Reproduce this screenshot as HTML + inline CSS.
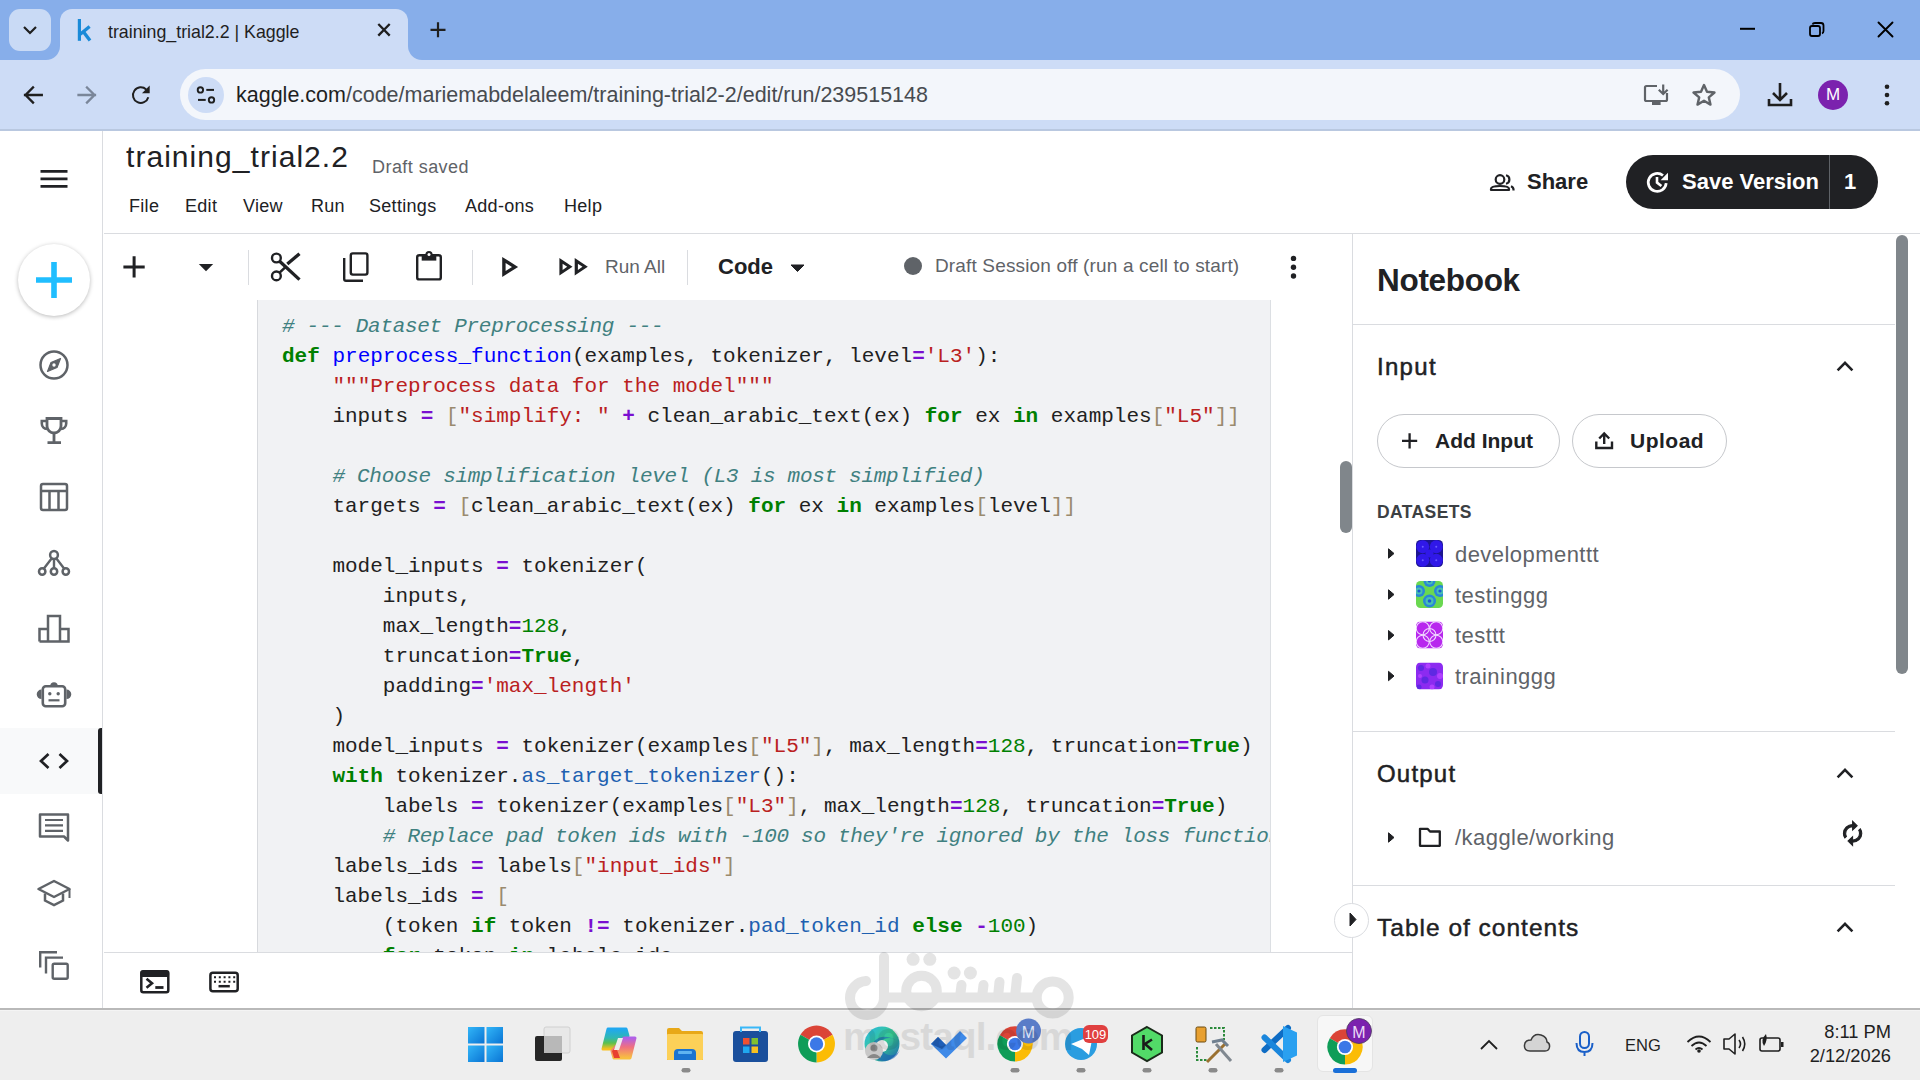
<!DOCTYPE html>
<html><head><meta charset="utf-8">
<style>
*{box-sizing:border-box;margin:0;padding:0}
html,body{width:1920px;height:1080px;overflow:hidden;background:#fff;font-family:"Liberation Sans",sans-serif;color:#202124}
.a{position:absolute}
svg{position:absolute;overflow:visible}
#tabstrip{left:0;top:0;width:1920px;height:61px;background:#87aeea}
#toolbar{left:0;top:60px;width:1920px;height:70px;background:#cddcf6}
#tbline{left:0;top:129px;width:1920px;height:2px;background:#b9c8e0}
#omni{left:180px;top:69px;width:1560px;height:51px;border-radius:26px;background:#f3f6fb}
.code{font-family:"Liberation Mono",monospace;font-size:21px;line-height:30px;white-space:pre;color:#212121}
.c{color:#408080;font-style:italic;letter-spacing:-0.3px}
.k{color:#008000;font-weight:bold}
.f{color:#0000ff}
.s{color:#ba2121}
.o{color:#7a0fd0;font-weight:bold}
.b{color:#9a8a6e}
.n{color:#008000}
.p{color:#2060b0}
</style></head><body>
<!-- ===== BROWSER CHROME ===== -->
<div id="tabstrip" class="a"></div>
<div class="a" style="left:60px;top:9px;width:348px;height:60px;border-radius:12px 12px 0 0;background:#cddcf6"></div>
<div class="a" style="left:46px;top:46px;width:14px;height:14px;background:#cddcf6"></div>
<div class="a" style="left:32px;top:32px;width:28px;height:28px;border-radius:0 0 14px 0;background:#87aeea"></div>
<div class="a" style="left:408px;top:46px;width:14px;height:14px;background:#cddcf6"></div>
<div class="a" style="left:408px;top:32px;width:28px;height:28px;border-radius:0 0 0 14px;background:#87aeea"></div>
<div class="a" style="left:9px;top:9px;width:42px;height:42px;border-radius:11px;background:#c9daf5"></div>
<svg style="left:0;top:0" width="1" height="1"><path d="M24 27 L30 33 L36 27" fill="none" stroke="#1f1f1f" stroke-width="2.2"/></svg>
<div id="toolbar" class="a"></div>
<div id="tbline" class="a"></div>

<!-- tab content -->
<svg style="left:0;top:0" width="1" height="1"><rect x="77.8" y="19" width="3.2" height="21.8" fill="#1a8ad8"/><path d="M80.2 34.2 L89.6 26.4" stroke="#1a8ad8" stroke-width="3.3"/><path d="M83.2 31.4 L90 40.6" stroke="#1a8ad8" stroke-width="3.3"/></svg>
<div class="a" style="left:108px;top:21px;font-size:17.8px;line-height:22px;color:#1f1f1f">training_trial2.2 | Kaggle</div>
<svg style="left:0;top:0" width="1" height="1"><path d="M378.3 24 L389.7 35.6 M389.7 24 L378.3 35.6" stroke="#1f1f1f" stroke-width="2.3"/></svg>
<svg style="left:0;top:0" width="1" height="1"><path d="M438 22.3 V37.3 M430.5 29.8 H445.5" stroke="#1f1f1f" stroke-width="2.2"/></svg>
<!-- window controls -->
<svg style="left:0;top:0" width="1" height="1"><path d="M1740 28.8 H1755" stroke="#000" stroke-width="2"/>
<rect x="1810" y="26" width="10" height="10" rx="2" fill="none" stroke="#000" stroke-width="1.8"/>
<path d="M1812.5 24.5 Q1813 23 1815 23 H1821 Q1823.5 23 1823.5 25.5 V31 Q1823.5 33 1822 33.5" fill="none" stroke="#000" stroke-width="1.8"/>
<path d="M1878.5 22.5 L1892.5 36.5 M1892.5 22.5 L1878.5 36.5" stroke="#000" stroke-width="1.9" stroke-linecap="round"/></svg>
<!-- nav buttons -->
<svg style="left:0;top:0" width="1" height="1">
<path d="M41.8 95 H25 M33 87.5 L25.5 95 L33 102.5" fill="none" stroke="#1f1f1f" stroke-width="2.3" stroke-linecap="square"/>
<path d="M78.5 95 H95 M87 87.5 L94.5 95 L87 102.5" fill="none" stroke="#7a8699" stroke-width="2.3" stroke-linecap="square"/>
<path d="M148.3 97.2 A 7.8 7.8 0 1 1 146.2 89.5" fill="none" stroke="#1f1f1f" stroke-width="2"/>
<path d="M149.7 85.5 V93.3 H142 Z" fill="#1f1f1f"/>
</svg>
<div id="omni" class="a"></div>
<div class="a" style="left:187.5px;top:76.5px;width:36px;height:36px;border-radius:18px;background:#cddcf6"></div>
<svg style="left:0;top:0" width="1" height="1">
<circle cx="200.4" cy="89.9" r="2.7" fill="none" stroke="#1f1f1f" stroke-width="1.9"/>
<path d="M206.3 89.9 H214" stroke="#1f1f1f" stroke-width="2"/>
<path d="M198 99.9 H205.7" stroke="#1f1f1f" stroke-width="2"/>
<circle cx="211.5" cy="99.9" r="2.7" fill="none" stroke="#1f1f1f" stroke-width="1.9"/>
</svg>
<div class="a" id="url" style="left:236px;top:82px;font-size:21.5px;line-height:26px;color:#1f1f1f;white-space:nowrap">kaggle.com<span style="color:#474b50">/code/mariemabdelaleem/training-trial2-2/edit/run/239515148</span></div>
<!-- right toolbar icons -->
<svg style="left:0;top:0" width="1" height="1">
<path d="M1657 86 H1646.5 Q1645 86 1645 87.5 V99.5 Q1645 101 1646.5 101 H1665.5 Q1667 101 1667 99.5 V93" fill="none" stroke="#5f6368" stroke-width="2.2"/>
<rect x="1652" y="101" width="8.6" height="4" fill="#5f6368"/>
<path d="M1663.2 84.5 V94 M1658.8 89.8 L1663.2 94 L1667.6 89.8" fill="none" stroke="#5f6368" stroke-width="2.2"/>
<path d="M1704 85 L1707 91.8 L1714.5 92.5 L1708.8 97.4 L1710.5 104.6 L1704 100.8 L1697.5 104.6 L1699.2 97.4 L1693.5 92.5 L1701 91.8 Z" fill="none" stroke="#5f6368" stroke-width="2.4" stroke-linejoin="round"/>
<path d="M1780 83 V100 M1773 93 L1780 100 L1787 93" fill="none" stroke="#1f1f1f" stroke-width="2.6"/>
<path d="M1769 99 V105 H1791 V99" fill="none" stroke="#1f1f1f" stroke-width="2.6"/>
<circle cx="1887" cy="86.7" r="2.3" fill="#1f1f1f"/><circle cx="1887" cy="95" r="2.3" fill="#1f1f1f"/><circle cx="1887" cy="103.3" r="2.3" fill="#1f1f1f"/>
</svg>
<div class="a" style="left:1818px;top:80px;width:30px;height:30px;border-radius:15px;background:#7b22ae;color:#fff;font-size:17px;line-height:30px;text-align:center">M</div>

<!-- ===== KAGGLE PAGE ===== -->
<!-- left nav -->
<div class="a" style="left:102px;top:131px;width:1px;height:877px;background:#dadce0"></div>
<svg style="left:0;top:0" width="1" height="1">
<path d="M40.5 171.3 H67.5 M40.5 178.8 H67.5 M40.5 186.3 H67.5" stroke="#202124" stroke-width="2.8"/>
</svg>
<div class="a" style="left:18px;top:244px;width:72px;height:72px;border-radius:36px;background:#fff;box-shadow:0 1px 4px rgba(0,0,0,0.28)"></div>
<svg style="left:0;top:0" width="1" height="1">
<path d="M54 262 V298 M36 280 H72" stroke="#20beff" stroke-width="5.6"/>
</svg>
<div id="navsel" class="a" style="left:0;top:728px;width:99px;height:66px;background:#f8f9fa"></div>
<div class="a" style="left:98px;top:728px;width:4px;height:66px;border-radius:3px 0 0 3px;background:#202124"></div>
<svg style="left:0;top:0" width="1" height="1" fill="none" stroke="#5f6368" stroke-width="2.5">
<!-- compass -->
<circle cx="54" cy="365" r="13.5"/>
<path d="M60.5 358.5 L57 367.5 L47.5 371.5 L51 362.5 Z" fill="#5f6368" stroke-width="1.2" stroke-linejoin="round"/>
<circle cx="54" cy="365" r="1.7" fill="#fff" stroke="none"/>
<!-- trophy -->
<path d="M47 418.5 H61 V426 A7 7 0 0 1 47 426 Z" stroke-width="2.8"/>
<path d="M47 421 H41.8 V423.5 A5.5 5.5 0 0 0 47 429 M61 421 H66.2 V423.5 A5.5 5.5 0 0 1 61 429" stroke-width="2.6"/>
<path d="M54 433 V442 M47.5 442.6 H61" stroke-width="2.8"/>
<!-- table -->
<rect x="41" y="484" width="26" height="26" rx="2"/>
<path d="M41 491 H67 M49.5 491 V510 M58.5 491 V510"/>
<!-- models -->
<circle cx="54" cy="555" r="3.9"/><circle cx="42.2" cy="571.5" r="3.2"/><circle cx="54" cy="571.5" r="3.2"/><circle cx="65.8" cy="571.5" r="3.2"/>
<path d="M51.8 558.3 L43.9 568.6 M54 559 V568.3 M56.2 558.3 L64.1 568.6" stroke-width="2.4"/>
<!-- chart -->
<path d="M39.5 641.5 H68.5 V629 H60 V641.5 M60 641.5 V616 H48 V641.5 M48 641.5 V629 H39.5 V641.5"/>
<!-- robot -->
<rect x="42.8" y="686.3" width="22.4" height="20" rx="3" stroke-width="2.6"/>
<path d="M41.5 689.5 A4.8 4.8 0 0 0 41.5 699.1 Z M66.5 689.5 A4.8 4.8 0 0 1 66.5 699.1 Z" fill="#5f6368" stroke="none"/>
<path d="M50.3 686 A3.7 3.7 0 0 1 57.7 686 Z" fill="#5f6368" stroke="none"/>
<circle cx="49.8" cy="693.7" r="1.7" fill="#5f6368" stroke="none"/><circle cx="58.2" cy="693.7" r="1.7" fill="#5f6368" stroke="none"/>
<path d="M48.5 700.3 H59.5" stroke-width="2.2"/>
<!-- comments -->
<path d="M40 814.5 H68 V840.5 L64 836.5 H40 Z" stroke-linejoin="round"/>
<path d="M45 820 H63 M45 825.4 H63 M45 830.8 H63" stroke-width="2.2"/>
<!-- learn -->
<path d="M38.5 889 L54 881 L69.5 889 L54 897 Z" stroke-linejoin="round"/>
<path d="M45 893.5 V900.5 L54 905 L63 900.5 V893.5"/>
<path d="M69.5 889 V898" stroke-width="2"/>
<!-- copy -->
<path d="M40.2 967.5 V952.3 H57" stroke-width="2.4"/>
<path d="M46 973.5 V957.6 H63" stroke-width="2.4"/>
<rect x="52.7" y="963.8" width="15" height="15" rx="1.5" stroke-width="2.4"/>
</svg>
<svg style="left:0;top:0" width="1" height="1" fill="none" stroke="#202124" stroke-width="3">
<path d="M48.5 754 L41 761 L48.5 768 M59.5 754 L67 761 L59.5 768" stroke-width="2.7"/>
</svg>

<!-- header -->
<div class="a" style="left:126px;top:138px;font-size:30px;line-height:38px;color:#202124;letter-spacing:1.05px">training_trial2.2</div>
<div class="a" style="left:372px;top:156px;font-size:18px;line-height:22px;color:#5f6368;letter-spacing:0.45px">Draft saved</div>
<div class="a" style="left:129px;top:195px;font-size:18px;line-height:22px;color:#202124;white-space:nowrap;letter-spacing:0.3px">
<span class="a" style="left:0">File</span><span class="a" style="left:56px">Edit</span><span class="a" style="left:114px">View</span><span class="a" style="left:182px">Run</span><span class="a" style="left:240px">Settings</span><span class="a" style="left:336px">Add-ons</span><span class="a" style="left:435px">Help</span></div>
<div class="a" style="left:104px;top:233px;width:1816px;height:1px;background:#dadce0"></div>

<!-- share / save version -->
<svg style="left:0;top:0" width="1" height="1" fill="none" stroke="#202124" stroke-width="2.3">
<circle cx="1500" cy="179.5" r="4.3" stroke-width="2.2"/>
<path d="M1491 190 V189 Q1491 186 1500 186 Q1509 186 1509 189 V190 Z" stroke-width="2.2" stroke-linejoin="round"/>
<path d="M1506 175.3 A4.3 4.3 0 0 1 1506 183.7 M1511 186.2 Q1513.5 187.2 1513.5 189.5 V190.5" stroke-width="2.2"/>
</svg>
<div class="a" style="left:1527px;top:169px;font-size:22px;line-height:26px;font-weight:bold;color:#202124">Share</div>
<div class="a" style="left:1626px;top:155px;width:252px;height:54px;border-radius:27px;background:#202124"></div>
<div class="a" style="left:1829px;top:155px;width:1px;height:54px;background:#5f6368"></div>
<svg style="left:0;top:0" width="1" height="1" fill="none" stroke="#fff" stroke-width="2.6">
<path d="M1666.2 183.2 A 9 9 0 1 1 1663 175.5" stroke-width="2.7"/>
<path d="M1668 172.8 V180.3 H1660.6 Z" fill="#fff" stroke="none"/>
<path d="M1657 177 V182.6 L1661.4 186" stroke-width="2.6"/>
</svg>
<div class="a" style="left:1682px;top:169px;font-size:22px;line-height:26px;font-weight:bold;color:#fff">Save Version</div>
<div class="a" style="left:1844px;top:169px;font-size:22px;line-height:26px;font-weight:bold;color:#fff">1</div>

<!-- notebook toolbar -->
<svg style="left:0;top:0" width="1" height="1" fill="none" stroke="#202124" stroke-width="2.6">
<path d="M134.1 256.3 V277.5 M123.4 266.9 H144.7" stroke-width="3"/>
<path d="M198.8 264 H213.2 L206 271.2 Z" fill="#202124" stroke="none"/>
</svg>
<div class="a" style="left:248px;top:250px;width:1px;height:35px;background:#dadce0"></div>
<div class="a" style="left:472px;top:250px;width:1px;height:35px;background:#dadce0"></div>
<div class="a" style="left:687px;top:250px;width:1px;height:35px;background:#dadce0"></div>
<svg style="left:0;top:0" width="1" height="1" fill="none" stroke="#202124" stroke-width="2.6">
<!-- scissors -->
<circle cx="276.4" cy="258" r="4.4" stroke-width="2.4"/><circle cx="276.4" cy="275.9" r="4.4" stroke-width="2.4"/>
<path d="M279.6 261.2 L299.5 279.6" stroke-width="3.3"/>
<path d="M287.3 264 L299.5 253.7" stroke-width="3.3"/>
<path d="M279.6 272.6 L286 266.6" stroke-width="2.6"/>
<!-- copy -->
<path d="M344.2 258 V279 Q344.2 280.8 346 280.8 H363" stroke-width="2.4"/>
<rect x="350.8" y="253.4" width="16.6" height="21.2" rx="2" stroke-width="2.4"/>
<!-- paste -->
<rect x="417.2" y="255.2" width="23.6" height="24.2" rx="2" stroke-width="2.4"/>
<rect x="421.7" y="254" width="14.6" height="6.6" fill="#202124" stroke="none"/>
<circle cx="429" cy="254.6" r="3.6" fill="#202124" stroke="none"/><circle cx="429" cy="254.6" r="1.5" fill="#fff" stroke="none"/>
<!-- play -->
<path d="M502.2 256.9 L518.1 266.9 L502.2 276.9 Z M505.6 262.9 V270.9 L512 266.9 Z" fill="#202124" fill-rule="evenodd" stroke="none"/>
<!-- run all -->
<path d="M559.4 258.1 L572.5 266.85 L559.4 275.6 Z M562.6 263.8 V269.9 L567.2 266.85 Z M574.7 258.1 L587.8 266.85 L574.7 275.6 Z M577.9 263.8 V269.9 L582.5 266.85 Z" fill="#202124" fill-rule="evenodd" stroke="none"/>
<!-- caret code -->
<path d="M791 265 H804 L797.5 271.5 Z" fill="#202124" stroke-width="1"/>
<circle cx="1293.5" cy="258.4" r="2.7" fill="#202124" stroke="none"/><circle cx="1293.5" cy="267.2" r="2.7" fill="#202124" stroke="none"/><circle cx="1293.5" cy="276" r="2.7" fill="#202124" stroke="none"/>
</svg>
<div class="a" style="left:605px;top:256px;font-size:19px;line-height:22px;color:#5f6368">Run All</div>
<div class="a" style="left:718px;top:254px;font-size:22px;line-height:26px;font-weight:bold;color:#202124">Code</div>
<div class="a" style="left:904px;top:256.5px;width:18px;height:18px;border-radius:9px;background:#5f6368"></div>
<div class="a" style="left:935px;top:255px;font-size:19px;line-height:22px;color:#5f6368;letter-spacing:0.15px">Draft Session off (run a cell to start)</div>
<div class="a" style="left:1352px;top:234px;width:1px;height:774px;background:#dadce0"></div>

<!-- code cell -->
<div class="a" style="left:257px;top:300px;width:1014px;height:653px;background:#f1f2f4;border-left:1px solid #d7d9dd;border-right:1px solid #dcdfe3;overflow:hidden">
<div class="a code" style="left:24px;top:12px"><span class="c"># --- Dataset Preprocessing ---</span>
<span class="k">def</span> <span class="f">preprocess_function</span>(examples, tokenizer, level<span class="o">=</span><span class="s">'L3'</span>):
    <span class="s">"""Preprocess data for the model"""</span>
    inputs <span class="o">=</span> <span class="b">[</span><span class="s">"simplify: "</span> <span class="o">+</span> clean_arabic_text(ex) <span class="k">for</span> ex <span class="k">in</span> examples<span class="b">[</span><span class="s">"L5"</span><span class="b">]]</span>

    <span class="c"># Choose simplification level (L3 is most simplified)</span>
    targets <span class="o">=</span> <span class="b">[</span>clean_arabic_text(ex) <span class="k">for</span> ex <span class="k">in</span> examples<span class="b">[</span>level<span class="b">]]</span>

    model_inputs <span class="o">=</span> tokenizer(
        inputs,
        max_length<span class="o">=</span><span class="n">128</span>,
        truncation<span class="o">=</span><span class="k">True</span>,
        padding<span class="o">=</span><span class="s">'max_length'</span>
    )
    model_inputs <span class="o">=</span> tokenizer(examples<span class="b">[</span><span class="s">"L5"</span><span class="b">]</span>, max_length<span class="o">=</span><span class="n">128</span>, truncation<span class="o">=</span><span class="k">True</span>)
    <span class="k">with</span> tokenizer.<span class="p">as_target_tokenizer</span>():
        labels <span class="o">=</span> tokenizer(examples<span class="b">[</span><span class="s">"L3"</span><span class="b">]</span>, max_length<span class="o">=</span><span class="n">128</span>, truncation<span class="o">=</span><span class="k">True</span>)
        <span class="c"># Replace pad token ids with -100 so they're ignored by the loss function</span>
    labels_ids <span class="o">=</span> labels<span class="b">[</span><span class="s">"input_ids"</span><span class="b">]</span>
    labels_ids <span class="o">=</span> <span class="b">[</span>
        (token <span class="k">if</span> token <span class="o">!=</span> tokenizer.<span class="p">pad_token_id</span> <span class="k">else</span> <span class="o">-</span><span class="n">100</span>)
        <span class="k">for</span> token <span class="k">in</span> labels_ids
    <span class="b">]</span></div>
</div>
<div class="a" style="left:1340px;top:461px;width:12px;height:72px;border-radius:6px;background:#80868b"></div>

<!-- bottom bar -->
<div class="a" style="left:104px;top:952px;width:1248px;height:1px;background:#dadce0"></div>
<div class="a" style="left:104px;top:953px;width:1248px;height:55px;background:#fff"></div>
<svg style="left:0;top:0" width="1" height="1" fill="none" stroke="#202124" stroke-width="2.6">
<rect x="141.3" y="971.2" width="27" height="21" rx="2" stroke-width="2.5"/>
<rect x="140.5" y="970.4" width="28.6" height="6.5" rx="2" fill="#202124" stroke="none"/>
<path d="M146.5 978.8 L152 983.3 L146.5 987.8" stroke-width="2.6"/>
<path d="M155.3 987.5 H163.5" stroke-width="2.8"/>
<rect x="210.4" y="972.8" width="27.3" height="18.4" rx="2.5" stroke-width="2.5"/>
<path d="M214 977.3 H235.5 M214 981.8 H235.5" stroke-width="2" stroke-dasharray="2 2.8"/>
<path d="M218.5 986.2 H229.8" stroke-width="2.5"/>
</svg>

<!-- right panel -->
<div class="a" style="left:1377px;top:263px;font-size:31.5px;line-height:34px;letter-spacing:-0.3px;font-weight:bold;color:#202124">Notebook</div>
<div class="a" style="left:1896px;top:235px;width:12px;height:439px;border-radius:6px;background:#80868b"></div>
<div class="a" style="left:1353px;top:324px;width:542px;height:1px;background:#dadce0"></div>
<div class="a" style="left:1377px;top:353px;font-size:24px;line-height:28px;color:#202124;letter-spacing:1.3px;-webkit-text-stroke:0.5px #202124">Input</div>
<div class="a" style="left:1377px;top:414px;width:183px;height:54px;border-radius:27px;border:1px solid #c6c8cc"></div>
<div class="a" style="left:1572px;top:414px;width:155px;height:54px;border-radius:27px;border:1px solid #c6c8cc"></div>
<div class="a" style="left:1435px;top:428px;font-size:21px;line-height:26px;font-weight:bold;color:#202124">Add Input</div>
<div class="a" style="left:1630px;top:428px;font-size:21px;line-height:26px;font-weight:bold;color:#202124;letter-spacing:0.5px">Upload</div>
<div class="a" style="left:1377px;top:502px;font-size:17.5px;line-height:20px;letter-spacing:0.4px;font-weight:bold;color:#3c4043">DATASETS</div>
<div class="a" style="left:1455px;top:542px;font-size:22px;line-height:26px;color:#5f6368;letter-spacing:0.45px">developmenttt</div>
<div class="a" style="left:1455px;top:583px;font-size:22px;line-height:26px;color:#5f6368;letter-spacing:0.45px">testinggg</div>
<div class="a" style="left:1455px;top:623px;font-size:22px;line-height:26px;color:#5f6368;letter-spacing:0.45px">testtt</div>
<div class="a" style="left:1455px;top:664px;font-size:22px;line-height:26px;color:#5f6368;letter-spacing:0.45px">traininggg</div>
<div class="a" style="left:1353px;top:731px;width:542px;height:1px;background:#dadce0"></div>
<div class="a" style="left:1377px;top:760px;font-size:24px;line-height:28px;color:#202124;letter-spacing:1.2px;-webkit-text-stroke:0.5px #202124">Output</div>
<div class="a" style="left:1455px;top:825px;font-size:22px;line-height:26px;color:#5f6368;letter-spacing:0.45px">/kaggle/working</div>
<div class="a" style="left:1353px;top:885px;width:542px;height:1px;background:#dadce0"></div>
<div class="a" style="left:1377px;top:912px;font-size:24.5px;line-height:32px;color:#202124;letter-spacing:1.0px;-webkit-text-stroke:0.45px #202124">Table of contents</div>
<div class="a" style="left:1334px;top:903px;width:35px;height:35px;border-radius:18px;background:#fff;border:1px solid #dadce0"></div>
<!-- dataset icons -->
<svg style="left:0;top:0" width="1" height="1">
<defs>
<clipPath id="ic1"><rect x="1416" y="540" width="27" height="27" rx="4.5"/></clipPath>
<clipPath id="ic2"><rect x="1416" y="581" width="27" height="27" rx="4.5"/></clipPath>
<clipPath id="ic3"><rect x="1416" y="621.5" width="27" height="27" rx="4.5"/></clipPath>
<clipPath id="ic4"><rect x="1416" y="662.5" width="27" height="27" rx="4.5"/></clipPath>
</defs>
<g clip-path="url(#ic1)">
<rect x="1416" y="540" width="27" height="27" fill="#1c1690"/>
<circle cx="1422.75" cy="546.75" r="6.5" fill="#3018e8"/><circle cx="1436.25" cy="546.75" r="6.5" fill="#3018e8"/>
<circle cx="1422.75" cy="560.25" r="6.5" fill="#3018e8"/><circle cx="1436.25" cy="560.25" r="6.5" fill="#3018e8"/>
<circle cx="1429.5" cy="553.5" r="4" fill="#3018e8"/>
<g fill="#6a5cff"><circle cx="1422.75" cy="546.75" r="1"/><circle cx="1436.25" cy="546.75" r="1"/><circle cx="1422.75" cy="560.25" r="1"/><circle cx="1436.25" cy="560.25" r="1"/></g>
</g>
<g clip-path="url(#ic2)">
<rect x="1416" y="581" width="27" height="27" fill="#6ad850"/>
<g fill="#2a86d8"><circle cx="1429.5" cy="581" r="6"/><circle cx="1419" cy="591" r="6"/><circle cx="1440" cy="591" r="6"/><circle cx="1429.5" cy="601" r="6.5"/></g>
<g fill="#48c0b0"><circle cx="1429.5" cy="581" r="3.5"/><circle cx="1419" cy="591" r="3.5"/><circle cx="1440" cy="591" r="3.5"/><circle cx="1429.5" cy="601" r="4"/></g>
<g fill="#1a5ad0"><circle cx="1429.5" cy="581" r="1.6"/><circle cx="1419" cy="591" r="1.6"/><circle cx="1440" cy="591" r="1.6"/><circle cx="1429.5" cy="601" r="1.8"/></g>
</g>
<g clip-path="url(#ic3)">
<rect x="1416" y="621.5" width="27" height="27" fill="#b828ee"/>
<g fill="none" stroke="#f0d8ff" stroke-width="1.1">
<circle cx="1422.75" cy="628.25" r="6.5"/><circle cx="1436.25" cy="628.25" r="6.5"/><circle cx="1422.75" cy="641.75" r="6.5"/><circle cx="1436.25" cy="641.75" r="6.5"/>
<circle cx="1429.5" cy="635" r="6.5"/>
</g>
</g>
<g clip-path="url(#ic4)">
<rect x="1416" y="662.5" width="27" height="27" fill="#8c2cf0"/>
<g fill="#5a2ae0" opacity="0.9"><circle cx="1421" cy="668" r="3"/><circle cx="1433" cy="672" r="4"/><circle cx="1425" cy="680" r="3.5"/><circle cx="1438" cy="684" r="3"/><circle cx="1419" cy="687" r="2.5"/></g>
<g fill="#b040ff"><circle cx="1428" cy="666" r="2.5"/><circle cx="1440" cy="676" r="3"/><circle cx="1420" cy="676" r="2"/><circle cx="1432" cy="687" r="2.5"/></g>
</g>
</svg>
<svg style="left:0;top:0" width="1" height="1" fill="none" stroke="#202124" stroke-width="2.6">
<path d="M1837.6 370.3 L1845 362.9 L1852.4 370.3"/>
<path d="M1837.6 777.3 L1845 769.9 L1852.4 777.3"/>
<path d="M1837.6 931.3 L1845 923.9 L1852.4 931.3"/>
<path d="M1402 440.8 H1417.2 M1409.6 433.2 V448.4" stroke-width="2.3"/>
<path d="M1596.3 441.5 V448 H1612 V441.5 M1604.2 444 V433.5 M1599.2 438.5 L1604.2 433.5 L1609.2 438.5" stroke-width="2.4"/>
<path d="M1388.5 548.8 L1394 553.5 L1388.5 558.2 Z M1388.5 589.8 L1394 594.5 L1388.5 599.2 Z M1388.5 630.5 L1394 635.2 L1388.5 639.9 Z M1388.5 671.3 L1394 676 L1388.5 680.7 Z M1388.5 832.8 L1394 837.5 L1388.5 842.2 Z" fill="#202124" stroke="#202124" stroke-width="1" stroke-linejoin="round"/>
<path d="M1420 828.8 H1427.5 L1430 831.5 H1439.8 V845.8 H1420 Z" stroke-width="2.3" stroke-linejoin="round"/>
<path d="M1350 913 L1356 919.5 L1350 926 Z" fill="#202124" stroke-width="1"/>
<path transform="translate(1852.6 833.4) scale(-1.15 1.1) translate(-12 -12)" d="M12 4V1L8 5l4 4V6c3.31 0 6 2.690 6 6 0 1.010-.25 1.970-.7 2.8l1.460 1.460C19.540 15.030 20 13.570 20 12c0-4.420-3.580-8-8-8zm0 14c-3.310 0-6-2.690-6-6 0-1.010.25-1.970.7-2.8L5.240 7.740C4.460 8.970 4 10.430 4 12c0 4.420 3.580 8 8 8v3l4-4-4-4v3z" fill="#202124" stroke="#202124" stroke-width="0.9"/>
</svg>

<!-- ===== TASKBAR ===== -->
<div class="a" style="left:0;top:1008px;width:1920px;height:72px;background:#eeeeee;border-top:2px solid #b9b9b9;box-shadow:inset 0 1px 0 #f4f4f4"></div>

<!-- taskbar icons -->
<div class="a" style="left:1317px;top:1015px;width:56px;height:57px;border-radius:6px;background:#f7f7f7;border:1px solid #e4e4e4"></div>
<svg style="left:0;top:0" width="1" height="1">
<defs>
<linearGradient id="win" x1="0" y1="0" x2="1" y2="1"><stop offset="0" stop-color="#32b6f8"/><stop offset="1" stop-color="#0a74d4"/></linearGradient>
<linearGradient id="cop" x1="0" y1="0" x2="1" y2="1"><stop offset="0" stop-color="#2f9be8"/><stop offset="0.35" stop-color="#5bc86a"/><stop offset="0.6" stop-color="#f2a03a"/><stop offset="1" stop-color="#c04ee0"/></linearGradient>
<linearGradient id="vsc" x1="0" y1="0" x2="1" y2="0"><stop offset="0" stop-color="#1a73c8"/><stop offset="1" stop-color="#2aa4ee"/></linearGradient>
<linearGradient id="edge" x1="0" y1="0" x2="1" y2="1"><stop offset="0" stop-color="#2ab8e8"/><stop offset="0.5" stop-color="#38c890"/><stop offset="1" stop-color="#1a5fb4"/></linearGradient>
</defs>
<!-- windows -->
<rect x="468" y="1027" width="16.5" height="16.5" fill="url(#win)"/><rect x="486.5" y="1027" width="16.5" height="16.5" fill="url(#win)"/>
<rect x="468" y="1045.5" width="16.5" height="16.5" fill="url(#win)"/><rect x="486.5" y="1045.5" width="16.5" height="16.5" fill="url(#win)"/>
<!-- task view -->
<rect x="544" y="1027" width="26" height="26" rx="2" fill="#e8e8e8" stroke="#d0d0d0" stroke-width="1"/>
<rect x="535" y="1036" width="27" height="25" rx="2" fill="#262626"/>
<rect x="544" y="1036" width="18" height="17" fill="#b8b8b8"/>
<!-- copilot -->
<linearGradient id="copL" x1="0" y1="0" x2="0" y2="1"><stop offset="0" stop-color="#20a8f0"/><stop offset="0.45" stop-color="#30b8b0"/><stop offset="0.7" stop-color="#5ac050"/><stop offset="1" stop-color="#f8c020"/></linearGradient>
<linearGradient id="copR" x1="0" y1="0" x2="0" y2="1"><stop offset="0" stop-color="#b060e8"/><stop offset="0.45" stop-color="#f07080"/><stop offset="1" stop-color="#f8c040"/></linearGradient>
<path d="M608 1029 L626 1029 L628 1036 L614 1049 L603 1049 Z" fill="url(#copL)" stroke="url(#copL)" stroke-width="3" stroke-linejoin="round"/>
<path d="M624 1038 L635 1038 L630 1058 L614 1058 L612 1051 Z" fill="url(#copR)" stroke="url(#copR)" stroke-width="3" stroke-linejoin="round"/>
<path d="M612 1051 L616 1047 L620 1058 L614 1058 Z" fill="#e84030"/>
<path d="M618 1038 L623 1038 L619 1050 L614 1050 Z" fill="#eeeeee"/>
<!-- explorer -->
<path d="M667 1030 Q667 1028 669 1028 H679 L682 1031 H701 Q703 1031 703 1033 V1060 H667 Z" fill="#e8a818"/>
<rect x="667" y="1034" width="36" height="26" rx="1" fill="#fcd058"/>
<path d="M674 1060 V1053 Q674 1049 678 1049 H692 Q696 1049 696 1053 V1060 Z" fill="#1a74d0"/>
<rect x="678" y="1051" width="14" height="3" rx="1" fill="#5fb4f0"/>
<!-- store -->
<rect x="733" y="1031" width="35" height="31" rx="3" fill="#1a4f9c"/>
<path d="M741 1032 V1027.5 H760 V1032" fill="none" stroke="#3ab8f8" stroke-width="2"/>
<rect x="743" y="1038" width="6.5" height="6.5" fill="#f05030"/><rect x="751.5" y="1038" width="6.5" height="6.5" fill="#80c030"/>
<rect x="743" y="1046.5" width="6.5" height="6.5" fill="#20a8f0"/><rect x="751.5" y="1046.5" width="6.5" height="6.5" fill="#f8c020"/>
</svg>
<svg style="left:0;top:0" width="1" height="1"><path d="M816.5 1044 L800.5 1034.8 A18.5 18.5 0 0 1 832.5 1034.8 Z" fill="#db4437"/><path d="M816.5 1044 L832.5 1034.8 A18.5 18.5 0 0 1 816.5 1062.5 Z" fill="#fbbc05"/><path d="M816.5 1044 L816.5 1062.5 A18.5 18.5 0 0 1 800.5 1034.8 Z" fill="#0f9d58"/><circle cx="816.5" cy="1044" r="8.5" fill="#fff"/><circle cx="816.5" cy="1044" r="6.7" fill="#3b78e7"/><circle cx="882" cy="1044" r="17.5" fill="url(#edge)"/><path d="M870 1050 Q876 1030 896 1040 Q890 1036 882 1040 Q874 1046 886 1054 Q894 1058 900 1050 Q894 1064 878 1060 Z" fill="#1a5fb4" opacity="0.6"/><circle cx="882" cy="1046" r="6" fill="#f0f0f0"/><circle cx="874" cy="1051" r="9" fill="#c8c8c8"/><circle cx="874" cy="1048" r="3.5" fill="#888"/><path d="M867 1058 Q874 1050 881 1058 Z" fill="#888"/><path d="M931 1044 L938 1037 L946 1045 L960 1031 L967 1038 L946 1058.5 Z" fill="#3f8ae8"/><path d="M931 1044 L938 1037 L946 1045 L942 1049 Z" fill="#1f5fb8"/><path d="M1015 1044 L999.8 1035.2 A17.5 17.5 0 0 1 1030.2 1035.2 Z" fill="#db4437"/><path d="M1015 1044 L1030.2 1035.2 A17.5 17.5 0 0 1 1015.0 1061.5 Z" fill="#fbbc05"/><path d="M1015 1044 L1015.0 1061.5 A17.5 17.5 0 0 1 999.8 1035.2 Z" fill="#0f9d58"/><circle cx="1015" cy="1044" r="8.1" fill="#fff"/><circle cx="1015" cy="1044" r="6.3" fill="#3b78e7"/><circle cx="1028.5" cy="1031" r="12.5" fill="#5a7cc8"/><text x="1028.5" y="1037.5" font-family="Liberation Sans" font-size="16" fill="#dfe6f8" text-anchor="middle">M</text><circle cx="1081" cy="1044" r="16" fill="#2a9de0"/><path d="M1071 1044 L1093 1035 L1089 1055 L1082 1049 Z" fill="#fff"/><rect x="1083" y="1025" width="25" height="18" rx="6" fill="#e04040"/><text x="1095.5" y="1039" font-family="Liberation Sans" font-size="13" fill="#fff" text-anchor="middle">109</text><path d="M1147 1027 L1162 1035.5 L1162 1052.5 L1147 1061 L1132 1052.5 L1132 1035.5 Z" fill="#52da68" stroke="#1a2a1a" stroke-width="2"/><path d="M1143.5 1035 V1050" stroke="#1a1a1a" stroke-width="2.6"/><path d="M1152 1039.5 L1145 1044 L1152 1050" fill="none" stroke="#1a1a1a" stroke-width="2.6"/><rect x="1196" y="1027" width="10" height="15" rx="1.5" fill="#e8a030" stroke="#6a4a10" stroke-width="1"/><path d="M1210 1028 H1224 V1040 M1197 1047 V1060 H1210" fill="none" stroke="#2a8a3a" stroke-width="2" stroke-dasharray="2.5 1.5"/><path d="M1207 1062 L1225 1044" stroke="#9a7030" stroke-width="3"/><path d="M1216 1044 L1231 1061" stroke="#808890" stroke-width="3"/><path d="M1212 1042 L1222 1040 L1228 1046" fill="none" stroke="#708090" stroke-width="3"/><path d="M1288 1028 L1264.5 1050" stroke="#0e6cc4" stroke-width="6" stroke-linecap="round"/><path d="M1264.5 1037.5 L1288 1060" stroke="#1a86dc" stroke-width="6" stroke-linecap="round"/><path d="M1283 1026 L1297 1032.5 V1055.5 L1283 1062 Z" fill="#2aa0f0"/><path d="M1345 1047 L1329.8 1038.2 A17.5 17.5 0 0 1 1360.2 1038.2 Z" fill="#db4437"/><path d="M1345 1047 L1360.2 1038.2 A17.5 17.5 0 0 1 1345.0 1064.5 Z" fill="#fbbc05"/><path d="M1345 1047 L1345.0 1064.5 A17.5 17.5 0 0 1 1329.8 1038.2 Z" fill="#0f9d58"/><circle cx="1345" cy="1047" r="8.1" fill="#fff"/><circle cx="1345" cy="1047" r="6.3" fill="#3b78e7"/><circle cx="1359" cy="1031" r="12.5" fill="#7b22ae" stroke="#4a3a5a" stroke-width="0.8"/><text x="1359" y="1037.5" font-family="Liberation Sans" font-size="16" fill="#ecdcf8" text-anchor="middle">M</text><rect x="681.5" y="1068" width="9" height="4.6" rx="2.3" fill="#8a8a8a"/><rect x="1010.5" y="1068" width="9" height="4.6" rx="2.3" fill="#8a8a8a"/><rect x="1076.5" y="1068" width="9" height="4.6" rx="2.3" fill="#8a8a8a"/><rect x="1142.5" y="1068" width="9" height="4.6" rx="2.3" fill="#8a8a8a"/><rect x="1208.5" y="1068" width="9" height="4.6" rx="2.3" fill="#8a8a8a"/><rect x="1274.5" y="1068" width="9" height="4.6" rx="2.3" fill="#8a8a8a"/><rect x="1333" y="1068" width="24" height="5" rx="2.5" fill="#1a6fd8"/><path d="M1481 1049 L1489 1041 L1497 1049" fill="none" stroke="#1f1f1f" stroke-width="1.8"/><path d="M1530 1051 Q1524 1051 1524.5 1045 Q1525 1040 1531 1040 Q1534 1033 1541 1035 Q1547 1037 1547 1042 Q1550 1043 1549.5 1047 Q1549 1051 1545 1051 Z" fill="#d4d4d4" stroke="#3a3a3a" stroke-width="1.5"/><rect x="1580" y="1032" width="9" height="16" rx="4.5" fill="none" stroke="#1a5fc8" stroke-width="2"/><path d="M1576.5 1043 Q1576.5 1052 1584.5 1052 Q1592.5 1052 1592.5 1043 M1584.5 1052 V1056" fill="none" stroke="#1a5fc8" stroke-width="2"/><path d="M1687.5 1042 Q1699 1031 1710.5 1042 M1691.5 1046 Q1699 1039 1706.5 1046 M1695.5 1049.5 Q1699 1046.5 1702.5 1049.5" fill="none" stroke="#1f1f1f" stroke-width="1.8"/><circle cx="1699" cy="1051" r="1.8" fill="#1f1f1f"/><path d="M1724 1039 H1729 L1735 1034 V1054 L1729 1049 H1724 Z" fill="none" stroke="#1f1f1f" stroke-width="1.6" stroke-linejoin="round"/><path d="M1739 1040 Q1742 1044 1739 1048 M1742.5 1037 Q1747 1044 1742.5 1051" fill="none" stroke="#1f1f1f" stroke-width="1.6"/><rect x="1760" y="1038" width="20" height="13" rx="2" fill="none" stroke="#1f1f1f" stroke-width="1.6"/><rect x="1781" y="1042" width="2.5" height="5" fill="#1f1f1f"/><path d="M1766 1034 Q1760 1040 1764 1046 Q1768 1040 1766 1034 Z" fill="#1f1f1f"/></svg><div class="a" style="left:1625px;top:1035px;font-size:16.5px;line-height:20px;color:#1f1f1f">ENG</div><div class="a" style="left:1790px;top:1020px;width:101px;text-align:right;font-size:18.3px;line-height:24px;color:#1f1f1f">8:11 PM<br>2/12/2026</div>

<!-- watermark -->
<svg style="left:0;top:0" width="1" height="1">
<g opacity="0.1">
<g fill="none" stroke="#000" stroke-width="10" stroke-linecap="round" stroke-linejoin="round">
<path d="M884 957 V997.5 A 17 17 0 1 1 866 981"/>
<path d="M884 997.5 H1036"/>
<circle cx="921.5" cy="991" r="15.3"/>
<path d="M960 997 L961.5 985 M982 997 L983.5 985 M998 997 L999.5 982 M1015 997 L1017 978"/>
<circle cx="1052.7" cy="997.5" r="16"/>
</g>
<g fill="#000">
<circle cx="913.1" cy="959.3" r="6.5"/><circle cx="929.8" cy="959.3" r="6.5"/>
<circle cx="954.1" cy="973" r="6.5"/><circle cx="970.4" cy="973" r="6.5"/>
</g>
<text id="wmt" x="843" y="1049.5" font-family="Liberation Sans" font-weight="bold" font-size="39" letter-spacing="-1" fill="#000" opacity="0.85">mostaql.com</text>
</g>
</svg>
</body></html>
